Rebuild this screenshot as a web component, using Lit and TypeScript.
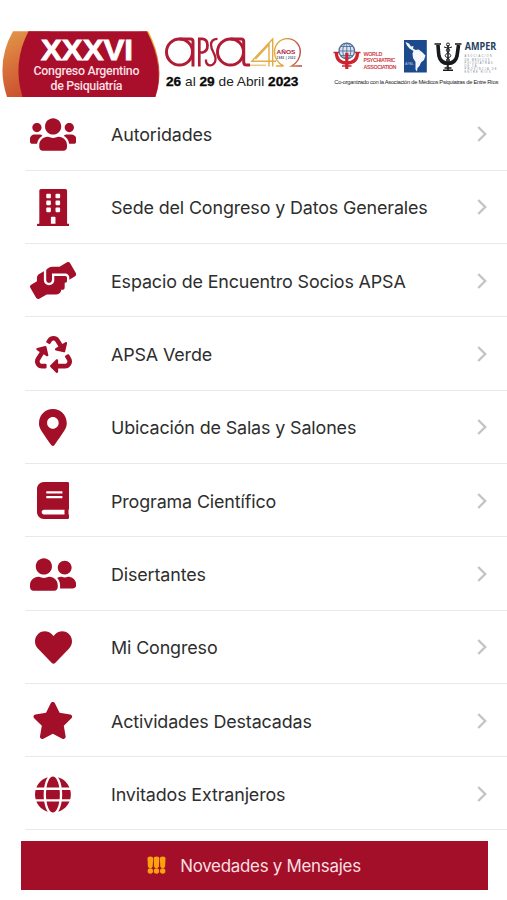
import { LitElement, html, css, svg } from "lit";
import { customElement, property } from "lit/decorators.js";

interface Glyph {
  w: number;
  d: string;
}

const pane = (x: number, y: number) =>
  `M${x} ${y + 12}c0-6.6 5.4-12 12-12h40c6.6 0 12 5.4 12 12v40c0 6.6-5.4 12-12 12h-40c-6.6 0-12-5.4-12-12z`;

const GLYPHS: Record<string, Glyph> = {
  users: {
    w: 640,
    d: "M96 224c35.3 0 64-28.7 64-64s-28.7-64-64-64-64 28.7-64 64 28.7 64 64 64zm448 0c35.3 0 64-28.7 64-64s-28.7-64-64-64-64 28.7-64 64 28.7 64 64 64zm32 32h-64c-17.6 0-33.5 7.1-45.1 18.6 40.3 22.1 68.9 62 75.1 109.4h66c17.7 0 32-14.3 32-32v-32c0-35.3-28.7-64-64-64zm-256 0c61.9 0 112-50.1 112-112S381.9 32 320 32 208 82.1 208 144s50.1 112 112 112zm76.8 32h-8.3c-20.8 10-43.9 16-68.5 16s-47.6-6-68.5-16h-8.3C179.6 288 128 339.6 128 403.2V432c0 26.5 21.5 48 48 48h288c26.5 0 48-21.5 48-48v-28.8c0-63.6-51.6-115.2-115.2-115.2zm-223.7-13.4C161.5 263.1 145.6 256 128 256H64c-35.3 0-64 28.7-64 64v32c0 17.7 14.3 32 32 32h65.9c6.3-47.4 34.9-87.3 75.2-109.4z",
  },
  building: {
    w: 448,
    d:
      "M436 480h-20V24c0-13.3-10.7-24-24-24H56C42.7 0 32 10.7 32 24v456H12c-6.6 0-12 5.4-12 12v20h448v-20c0-6.6-5.4-12-12-12z" +
      [64, 160, 256].map((y) => pane(128, y) + pane(256, y)).join("") +
      "M192 480v-84c0-6.6 5.4-12 12-12h40c6.6 0 12 5.4 12 12v84z",
  },
  hands: {
    w: 640,
    d: "M488 192H336v56c0 39.7-32.3 72-72 72s-72-32.3-72-72V126.4l-64.9 39C107.8 176.9 96 197.8 96 220.2v47.3l-80 46.2C.7 322.5-4.6 342.1 4.3 357.4l80 138.6c8.8 15.3 28.4 20.5 43.7 11.7L231.4 448H368c35.3 0 64-28.7 64-64h16c17.7 0 32-14.3 32-32v-64h8c13.3 0 24-10.7 24-24v-48c0-13.3-10.7-24-24-24zm147.7-37.4L555.7 16C546.9.7 527.3-4.5 512 4.3L408.6 64H306.4c-12 0-23.7 3.4-33.9 9.7L239 94.6c-9.4 5.8-15 16.1-15 27.1V248c0 22.1 17.9 40 40 40s40-17.9 40-40v-88h184c30.9 0 56 25.1 56 56v28.5l80-46.2c15.3-8.9 20.5-28.4 11.7-43.7z",
  },
  recycle: {
    w: 512,
    d: "M184.561 261.903c3.232 13.997-12.123 24.635-24.068 17.168l-40.736-25.455-50.867 81.402C55.606 356.273 70.96 384 96.012 384H148c6.627 0 12 5.373 12 12v40c0 6.627-5.373 12-12 12H96.115c-75.334 0-121.302-83.048-81.408-146.88l50.822-81.388-40.725-25.448c-12.081-7.547-8.966-25.961 4.879-29.158l110.237-25.45c8.611-1.988 17.201 3.381 19.189 11.99l25.452 110.237zm98.561-182.915l41.289 66.076-40.74 25.457c-12.051 7.528-9 25.953 4.879 29.158l110.237 25.45c8.672 1.999 17.215-3.438 19.189-11.99l25.45-110.237c3.197-13.844-11.99-24.719-24.068-17.168l-40.687 25.424-41.263-66.082c-37.521-60.033-125.209-60.171-162.816 0l-17.963 28.766c-3.51 5.62-1.8 13.021 3.82 16.533l33.919 21.195c5.62 3.512 13.024 1.803 16.536-3.817l17.961-28.743c12.712-20.341 41.973-19.676 54.257-.022zM497.288 301.12l-27.515-44.065c-3.511-5.623-10.916-7.334-16.538-3.821l-33.861 21.159c-5.62 3.512-7.33 10.915-3.818 16.536l27.564 44.112c13.257 21.211-2.057 48.96-27.136 48.96H320V336.02c0-14.213-17.242-21.383-27.313-11.313l-80 79.981c-6.249 6.248-6.249 16.379 0 22.627l80 79.989C302.689 517.308 320 510.3 320 495.989V448h95.88c75.274 0 121.335-82.997 81.408-146.88z",
  },
  pin: {
    w: 384,
    d: "M172.268 501.67C26.97 291.031 0 269.413 0 192 0 85.961 85.961 0 192 0s192 85.961 192 192c0 77.413-26.97 99.031-172.268 309.67-9.535 13.774-29.93 13.773-39.464 0zM192 272c44.183 0 80-35.817 80-80s-35.817-80-80-80-80 35.817-80 80 35.817 80 80 80z",
  },
  book: {
    w: 448,
    d: "M448 360V24c0-13.3-10.7-24-24-24H96C43 0 0 43 0 96v320c0 53 43 96 96 96h328c13.3 0 24-10.7 24-24v-16c0-7.5-3.5-14.3-8.9-18.7-4.2-15.4-4.2-59.3 0-74.7 5.4-4.3 8.9-11.1 8.9-18.6zM128 134c0-3.3 2.7-6 6-6h212c3.3 0 6 2.7 6 6v20c0 3.3-2.7 6-6 6H134c-3.3 0-6-2.7-6-6v-20zm0 64c0-3.3 2.7-6 6-6h212c3.3 0 6 2.7 6 6v20c0 3.3-2.7 6-6 6H134c-3.3 0-6-2.7-6-6v-20zm253.4 250H96c-17.7 0-32-14.3-32-32 0-17.6 14.4-32 32-32h285.4c-1.9 17.1-1.9 46.9 0 64z",
  },
  friends: {
    w: 640,
    d: "M192 256c61.9 0 112-50.1 112-112S253.9 32 192 32 80 82.1 80 144s50.1 112 112 112zm76.8 32h-8.3c-20.8 10-43.9 16-68.5 16s-47.6-6-68.5-16h-8.3C51.6 288 0 339.6 0 403.2V432c0 26.5 21.5 48 48 48h288c26.5 0 48-21.5 48-48v-28.8c0-63.6-51.6-115.2-115.2-115.2zM480 256c53 0 96-43 96-96s-43-96-96-96-96 43-96 96 43 96 96 96zm48 32h-3.8c-13.9 4.8-28.6 8-44.2 8s-30.3-3.2-44.2-8H432c-20.4 0-39.2 5.9-55.7 15.4 24.4 26.3 39.7 61.2 39.7 99.8v38.4c0 2.2-.5 4.3-.6 6.4H592c26.5 0 48-21.5 48-48 0-61.9-50.1-112-112-112z",
  },
  heart: {
    w: 512,
    d: "M462.3 62.6C407.5 15.9 326 24.3 275.7 76.2L256 96.5l-19.7-20.3C186.1 24.3 104.5 15.9 49.7 62.6c-62.8 53.6-66.1 149.8-9.9 207.9l193.5 199.8c12.5 12.9 32.8 12.9 45.3 0l193.5-199.8c56.3-58.1 53-154.3-9.8-207.9z",
  },
  star: {
    w: 576,
    d: "M259.3 17.8L194 150.2 47.9 171.5c-26.2 3.8-36.7 36.1-17.7 54.6l105.7 103-25 145.5c-4.5 26.3 23.2 46 46.4 33.7L288 439.6l130.7 68.7c23.2 12.2 50.9-7.4 46.4-33.7l-25-145.5 105.7-103c19-18.5 8.5-50.8-17.7-54.6L382 150.2 316.7 17.8c-11.7-23.6-45.6-23.9-57.4 0z",
  },
  globe: {
    w: 496,
    d: "M336.5 160C322 70.7 287.8 8 248 8s-74 62.7-88.5 152h177zM152 256c0 22.2 1.2 43.5 3.3 64h185.3c2.1-20.5 3.3-41.8 3.3-64s-1.2-43.5-3.3-64H155.3c-2.1 20.5-3.3 41.8-3.3 64zm324.7-96c-28.6-67.9-86.5-120.4-158-141.6 24.4 33.8 41.2 84.7 50 141.6h108zM177.2 18.4C105.8 39.6 47.8 92.1 19.3 160h108c8.7-56.9 25.5-107.8 49.9-141.6zM487.4 192H372.7c2.1 21 3.3 42.5 3.3 64s-1.2 43-3.3 64h114.6c5.5-20.5 8.6-41.8 8.6-64s-3.1-43.5-8.5-64zM120 256c0-21.5 1.2-43 3.3-64H8.6C3.2 212.5 0 233.8 0 256s3.2 43.5 8.6 64h114.6c-2-21-3.2-42.5-3.2-64zm39.5 96c14.5 89.3 48.7 152 88.5 152s74-62.7 88.5-152h-177zm159.3 141.6c71.4-21.2 129.4-73.7 158-141.6h-108c-8.8 56.9-25.6 107.8-50 141.6zM19.3 352c28.6 67.9 86.5 120.4 158 141.6-24.4-33.8-41.2-84.7-50-141.6h-108z",
  },
};

const ITEMS: [string, string][] = [
  ["users", "Autoridades"],
  ["building", "Sede del Congreso y Datos Generales"],
  ["hands", "Espacio de Encuentro Socios APSA"],
  ["recycle", "APSA Verde"],
  ["pin", "Ubicación de Salas y Salones"],
  ["book", "Programa Científico"],
  ["friends", "Disertantes"],
  ["heart", "Mi Congreso"],
  ["star", "Actividades Destacadas"],
  ["globe", "Invitados Extranjeros"],
];

@customElement("congress-banner")
export class CongressBanner extends LitElement {
  static styles = css`
    :host { display: block; height: 66px; }
    svg { display: block; overflow: visible; }
    .sans { font-family: "Liberation Sans", Arial, sans-serif; }
    .title { font-family: "Liberation Sans", Arial, sans-serif; font-weight: 700; font-size: 30px; fill: #fff; stroke: #fff; stroke-width: 0.9; }
    .sub { font-family: Roboto, sans-serif; font-weight: 500; font-size: 12.4px; fill: #fbdfe2; }
    .date { font-size: 12.6px; fill: #222; }
    .bold { font-weight: 700; fill: #080808; stroke: #080808; stroke-width: 0.3; }
    .years { font-weight: 700; font-size: 5.8px; fill: #b0203c; }
    .span { font-weight: 700; font-size: 2.8px; fill: #35406e; }
    .wpa { font-weight: 700; font-size: 5.4px; fill: #d0454b; }
    .apal { font-size: 4px; fill: #a9bfdf; }
    .amper { font-family: "Open Sans", sans-serif; font-weight: 700; font-size: 9.8px; fill: #24405f; }
    .tiny { font-size: 2.6px; fill: #7c8791; }
    .foot { font-size: 5.8px; fill: #1c1c1c; }
  `;

  render() {
    const tiny: [string, number][] = [
      ["ASOCIACION", 27],
      ["DE MEDICOS", 25],
      ["PSIQUIATRAS", 28],
      ["DE LA", 12],
      ["PROVINCIA DE", 32],
      ["ENTRE RIOS", 26],
    ];
    return html`<svg width="507" height="66" viewBox="0 0 507 66">
      <defs>
        <linearGradient id="amber" x1="0" y1="0" x2="0.4" y2="1">
          <stop offset="0" stop-color="#e39a4a" />
          <stop offset="0.45" stop-color="#d9763c" />
          <stop offset="1" stop-color="#c9502f" />
        </linearGradient>
        <linearGradient id="rim" x1="0" y1="0" x2="0" y2="1">
          <stop offset="0" stop-color="#f3c534" />
          <stop offset="0.5" stop-color="#d8603a" />
          <stop offset="1" stop-color="#b81f35" />
        </linearGradient>
        <linearGradient id="gold" gradientUnits="userSpaceOnUse" x1="252" y1="0" x2="302" y2="0">
          <stop offset="0" stop-color="#dfb04a" />
          <stop offset="0.6" stop-color="#e3a83e" />
          <stop offset="0.85" stop-color="#cf6a45" />
          <stop offset="1" stop-color="#b8404a" />
        </linearGradient>
      </defs>

      <path fill="url(#amber)" d="M13 .3H50V66H7Q-4.500 31 13 .3Z" />
      <path fill="url(#rim)" d="M140 .3H148.500Q166 36 155.500 66H140Z" />
      <path fill="#a90f2b" d="M28.500 .3H147Q165 36 155 66H22.500Q12 32 28.500 .3Z" />
      <text class="title" x="41" y="29" textLength="92" lengthAdjust="spacingAndGlyphs">XXXVI</text>
      <text class="sub" x="33.500" y="44.200" textLength="106">Congreso Argentino</text>
      <text class="sub" x="50.500" y="59.200" textLength="72">de Psiquiatría</text>

      <g fill="none" stroke="#b01c36" stroke-width="3">
        <circle cx="179.500" cy="21" r="13" />
        <path d="M179.500 8H190.500Q193 8 193 10.500V35.500" />
        <path stroke-width="2.700" d="M199.300 35.500V7.900H202.500Q207.500 8.500 207.500 14.500T202.500 21.500H200" />
        <path stroke-width="2.300" d="M217.500 7.800Q211.300 8 211 13.500Q211 17 213.500 21.500Q216.500 27 215 31Q213 34.600 209.500 34.300Q205.500 33.500 206 28.500" />
        <circle cx="230.500" cy="21" r="13" />
        <path d="M230.500 8H241Q243.700 8 243.700 10.500V31Q243.700 34 246.500 34H250" />
      </g>
      <g fill="none" stroke="url(#gold)" stroke-width="1.400">
        <path d="M272.700 35.500V8L251.800 30.200H276" />
        <path d="M269 35.500V13.500L255.500 28" />
        <path d="M250 34.200H266" stroke-width="1" />
        <path d="M276 35H283.500Q274.500 30.500 274.500 20.500A12.900 12.900 0 0 1 300.300 20.500Q300.300 30 291.500 35H302" />
      </g>
      <text class="sans years" x="276.600" y="23" textLength="18.800" lengthAdjust="spacingAndGlyphs">AÑOS</text>
      <text class="sans span" x="276.800" y="28" textLength="18.500">1983 | 2023</text>
      <text class="sans date" x="166" y="54.600" textLength="132.500" lengthAdjust="spacingAndGlyphs"><tspan class="bold">26</tspan> al <tspan class="bold">29</tspan> de Abril <tspan class="bold">2023</tspan></text>

      <g fill="none">
        <circle cx="346.800" cy="20" r="7.800" fill="#dce4ee" stroke="#516f9b" stroke-width="1.300" />
        <path stroke="#516f9b" stroke-width="0.900" d="M339 20H355M346.800 12V28M341 15.500H353M341 24.500H353" />
        <ellipse cx="346.800" cy="20" rx="4" ry="7.800" stroke="#516f9b" stroke-width="0.900" />
        <path stroke="#cb2430" stroke-width="3.200" d="M336.300 21.500Q336.500 32 346.800 32Q357.500 32 357.500 21.500M346.800 22V38" />
        <path stroke="#cb2430" stroke-width="1.400" d="M333.500 21.500H339M355 21.500H360.500M342 35H351.500" />
      </g>
      <text class="sans wpa" x="363.500" y="25" textLength="19">WORLD</text>
      <text class="sans wpa" x="363.500" y="31.300" textLength="32">PSYCHIATRIC</text>
      <text class="sans wpa" x="363.500" y="37.500" textLength="33">ASSOCIATION</text>

      <rect x="404" y="9" width="22.800" height="32.500" fill="#1d4a8c" />
      <path fill="#f4f7fb" d="M405.500 11L409 12.500 411 15.500 413.500 15 413 17.500 415.500 19 418.500 18.500 422 21 425.500 24.500 424 29 421 31.500 419.500 35 417.500 37 417 40.500 415.500 38.500 415.500 31 413 27 412.500 22.500 413.500 20 409.500 17.500 407 14.500Z" />
      <text class="sans apal" x="405" y="34" textLength="9" lengthAdjust="spacingAndGlyphs">APAL</text>

      <g fill="none" stroke="#17191c">
        <path stroke-width="3.600" d="M438 14Q438.500 22 439 25Q440.500 32 448 32.500Q455.500 32 457 25Q457.500 22 458.500 14" />
        <path stroke-width="1.500" d="M434.500 13H441M455 13H461.500M448 14V39M443 39.300H453M444.500 37H451.500" />
        <path stroke-width="1" d="M444 16Q453 18 448 21.500T447 26.500T449 31T447 36M452 16Q443 18 448 21.500T449 26.500T447 31" />
        <circle cx="448" cy="13.500" r="1.500" stroke-width="1" />
      </g>
      <text class="amper" x="464.800" y="19.200" textLength="31.500" lengthAdjust="spacingAndGlyphs">AMPER</text>
      ${tiny.map(
        ([t, w], i) => svg`<text class="sans tiny" x="464.500" y=${26.4 + i * 3.15} textLength=${w}>${t}</text>`
      )}
      <text class="sans foot" x="334.300" y="53.200" textLength="164">Co-organizado con la Asociación de Médicos Psiquiatras de Entre Ríos</text>
    </svg>`;
  }
}

@customElement("menu-row")
export class MenuRow extends LitElement {
  @property() icon = "users";
  @property() label = "";

  static styles = css`
    :host { display: block; }
    .row {
      box-sizing: border-box;
      height: 100%;
      display: grid;
      grid-template-columns: 57px 1fr 12px;
      column-gap: 29px;
      align-items: center;
      padding: 0 19px 0 24.5px;
    }
    .icon { display: flex; justify-content: center; }
    .glyph { display: block; fill: #a30f29; height: 37px; }
    .label {
      color: #2e2e2e;
      font-size: 17.9px;
      letter-spacing: -0.13px;
      line-height: 24px;
      white-space: nowrap;
      padding: 2px 0 0 0.5px;
    }
    .chevron { display: block; fill: none; stroke: #c4c4c6; stroke-width: 2.4; }
  `;

  render() {
    const g = GLYPHS[this.icon];
    return html`<div class="row">
      <div class="icon">
        <svg class="glyph" width=${(g.w * 37) / 512} height="37" viewBox="0 0 ${g.w} 512">
          <path fill-rule="evenodd" d=${g.d} />
        </svg>
      </div>
      <div class="label">${this.label}</div>
      <svg class="chevron" width="12" height="18" viewBox="0 0 12 18"><path d="M2.200 2L9.200 9L2.200 16" /></svg>
    </div>`;
  }
}

@customElement("app-root")
export class AppRoot extends LitElement {
  static styles = css`
    :host {
      display: block;
      box-sizing: border-box;
      height: 900px;
      padding-top: 31px;
      background: #fff;
      font-family: Inter, "Liberation Sans", sans-serif;
      overflow: hidden;
    }
    .list { display: flex; flex-direction: column; height: 733.3px; margin-top: 0.5px; }
    .item {
      flex: 1;
      background: linear-gradient(#e9e9e9, #e9e9e9) 25px 100% / 100% 1.3px no-repeat;
    }
    .news {
      display: flex;
      align-items: center;
      justify-content: center;
      gap: 14px;
      height: 49px;
      margin: 10.2px 19.5px 0 20.5px;
      background: #a30f29;
      color: #fbdfe2;
      font-size: 16.9px;
      letter-spacing: -0.26px;
    }
    .marks { display: block; fill: #fba30d; }
    .caption { padding-top: 2px; }
  `;

  render() {
    return html`
      <congress-banner></congress-banner>
      <div class="list">
        ${ITEMS.map(([icon, label]) => html`<menu-row class="item" icon=${icon} label=${label}></menu-row>`)}
      </div>
      <div class="news">
        <svg class="marks" width="19" height="18" viewBox="0 0 19 18">
          ${[3.3, 9.5, 15.7].map(
            (x) => svg`<path d="M${x - 2.8} 2.500Q${x - 2.8} .4 ${x} .4T${x + 2.8} 2.500L${x + 2.4} 10.500Q${x + 2} 12.200 ${x} 12.200T${x - 2.4} 10.500Z" />
              <circle cx=${x} cy="15" r="2.700" />`
          )}
        </svg>
        <span class="caption">Novedades y Mensajes</span>
      </div>
    `;
  }
}
